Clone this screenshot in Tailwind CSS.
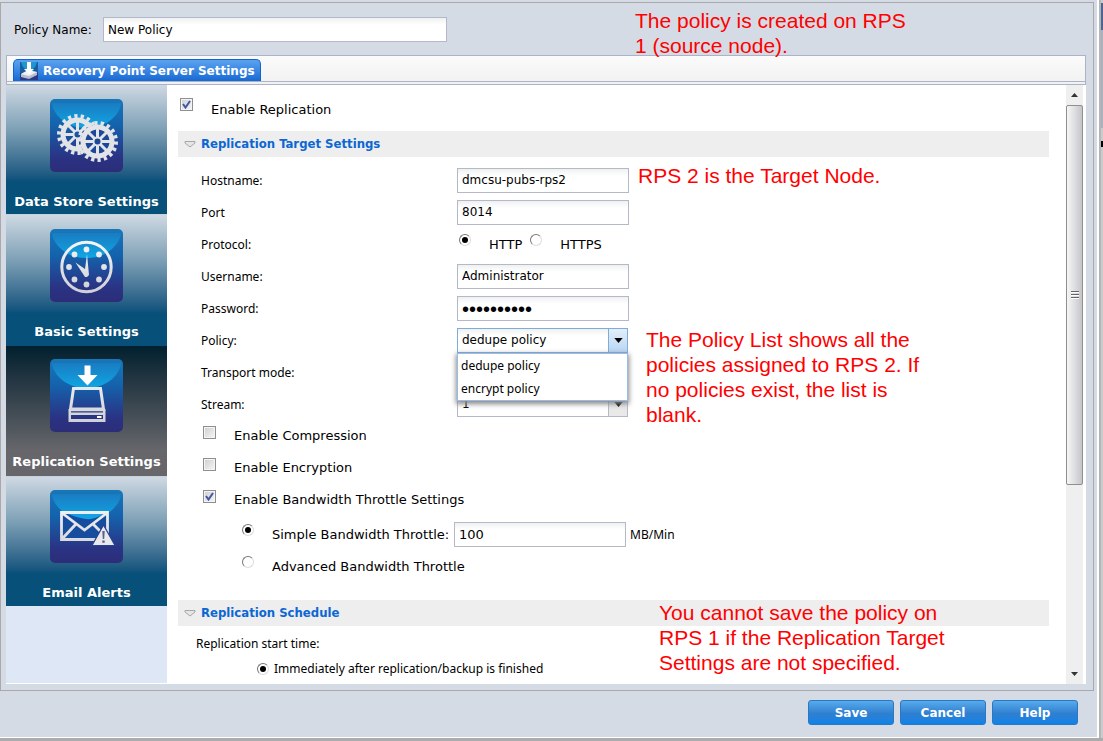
<!DOCTYPE html>
<html lang="en">
<head>
    <meta charset="utf-8">
    <title>New Policy</title>
    <script src="https://cdn.jsdelivr.net/npm/@tailwindcss/browser@4"></script>
</head>
<body class="flex min-h-screen bg-[#acacac] pb-[3px] font-['Noto_Sans','DejaVu_Sans',sans-serif] text-xs text-black">

<!-- shared gradients and icon parts -->
<svg class="absolute size-0" aria-hidden="true">
    <defs>
        <linearGradient id="tile" x1="0" y1="0" x2="0" y2="1">
            <stop offset="0" stop-color="#1777b9"/>
            <stop offset=".35" stop-color="#1463ad"/>
            <stop offset=".8" stop-color="#2a3384"/>
            <stop offset="1" stop-color="#2c2d78"/>
        </linearGradient>
        <linearGradient id="gloss" x1="0" y1="0" x2="0" y2="1">
            <stop offset="0" stop-color="#1a7cc2"/>
            <stop offset="1" stop-color="#0fa6e4"/>
        </linearGradient>
        <linearGradient id="metal" gradientUnits="userSpaceOnUse" x1="0" y1="15" x2="0" y2="62">
            <stop offset="0" stop-color="#f4f4f6"/>
            <stop offset="1" stop-color="#d0d1d6"/>
        </linearGradient>
        <g id="base">
            <rect width="73" height="73" rx="5" fill="url(#tile)"/>
            <path d="M2 4H71C71 12 60 29 36.500 29S2 12 2 4Z" fill="url(#gloss)"/>
        </g>
        <g id="gear" fill="none" stroke="#e3e4e8">
            <circle r="18.500" stroke-width="4" pathLength="36" stroke-dasharray="1 1"/>
            <circle r="14.500" stroke-width="5"/>
            <circle r="4" stroke-width="2"/>
            <path d="M0-13V-4M0 13V4M-13 0H-4M13 0H4M-9-9L-3-3M9-9L3-3M-9 9L-3 3M9 9L3 3" stroke-width="3"/>
        </g>
    </defs>
</svg>

<div class="flex min-w-0 flex-1 flex-col border-r-2 border-b border-white bg-[#d5dbe5] pt-[2px]">
    <main class="relative mr-[3px] flex flex-1 flex-col border border-[#a9a9ac] pr-[7px] pb-[6px] pl-[5px]">

        <div class="flex items-center gap-[9px] pt-[14px] pb-[13px] pl-2 font-['DejaVu_Sans',sans-serif]">
            <label for="policy-name" class="w-20 whitespace-nowrap">Policy Name:</label>
            <input id="policy-name" type="text" value="New Policy" class="h-[25px] w-[344px] border border-[#b5b8c8] bg-white bg-linear-to-b from-[#eff1f1] to-white to-30% px-1">
        </div>

        <div class="border border-[#abb3c9] bg-[#fafafa] bg-linear-to-b from-[#fbfbfb] to-[#f1f1f1] pb-[2px]">
            <div class="flex border-b border-[#abb3c9] pt-[3px] pl-[6px]">
                <button type="button" class="flex h-[22px] items-center gap-[5px] rounded-t-[5px] border border-b-0 border-[#1064cf] bg-linear-to-b from-[#5ba3f0] to-[#1568d3] pr-[5px] pl-[6px] font-['DejaVu_Sans',sans-serif] font-bold whitespace-nowrap text-white">
                    <svg class="size-[18px]" viewBox="0 0 18 18">
                        <path fill="#17609f" d="M0 0H18V18H0z"/>
                        <path fill="#2b3b85" d="M0 11H18V18H0z"/>
                        <path fill="#1e96d4" d="M1 0H17Q15 8 9 8T1 0z"/>
                        <path fill="#b6bfd0" d="M1 12L8 9L17 10V13L9 17L1 15z"/>
                        <path fill="#eef1f6" d="M1 12L8 8L17 10L9 14z"/>
                        <path fill="#fff" d="M7 0H11V7H14L9 12L4 7H7z"/>
                    </svg>
                    Recovery Point Server Settings
                </button>
            </div>
        </div>

        <div class="flex flex-1 bg-white">
            <nav class="flex w-[161px] shrink-0 flex-col border-b border-white bg-[#dde7f6] font-['DejaVu_Sans',sans-serif] text-[13px] leading-4 font-bold text-white">
                <a href="#data-store" class="flex h-[130px] flex-col items-center gap-[22px] border-b border-[#c5d3df] bg-linear-to-b from-[#cfd9e3] via-[#7c9fb5] via-35% to-[#06507a] to-75% pt-[14px] whitespace-nowrap">
                    <svg class="size-[73px] shrink-0" viewBox="0 0 73 73">
                        <use href="#base"/>
                        <use href="#gear" transform="translate(27.500 35.500)"/>
                        <circle cx="47.500" cy="42.500" r="17" fill="#1d489a"/>
                        <use href="#gear" transform="translate(47.500 42.500)"/>
                    </svg>
                    Data Store Settings
                </a>
                <a href="#basic" class="flex h-[131px] flex-col items-center gap-[22px] bg-linear-to-b from-[#cfd9e3] via-[#7c9fb5] via-35% to-[#06507a] to-75% pt-[14px] whitespace-nowrap">
                    <svg class="size-[73px] shrink-0" viewBox="0 0 73 73">
                        <use href="#base"/>
                        <circle cx="36.500" cy="38" r="24.700" fill="none" stroke="url(#metal)" stroke-width="3"/>
                        <g fill="url(#metal)">
                            <circle cx="36.500" cy="20.500" r="2.900"/>
                            <circle cx="49" cy="25.500" r="2.900"/>
                            <circle cx="54" cy="38" r="2.900"/>
                            <circle cx="49" cy="50.500" r="2.900"/>
                            <circle cx="36.500" cy="55.500" r="2.900"/>
                            <circle cx="24.500" cy="50.500" r="2.900"/>
                            <circle cx="19" cy="38" r="2.900"/>
                            <circle cx="24.500" cy="25.500" r="2.900"/>
                            <path d="M37 25L39 46L37 48H35L25.500 33.500L35 40z"/>
                        </g>
                    </svg>
                    Basic Settings
                </a>
                <a href="#replication" aria-current="page" class="flex h-[130px] flex-col items-center gap-[22px] bg-linear-to-b from-[#02202f] to-[#66666b] to-80% pt-[13px] whitespace-nowrap">
                    <svg class="size-[73px] shrink-0" viewBox="0 0 73 73">
                        <use href="#base"/>
                        <path fill="#fff" d="M34.500 6.500H40.500V16H47.500L37.500 26.500L27.500 16H34.500z"/>
                        <path fill="none" stroke="url(#metal)" stroke-width="3" d="M23.500 29.500H50.500L53.500 50H20.500z"/>
                        <path fill="url(#metal)" fill-rule="evenodd" d="M18.500 50H55.500V63H18.500zM21 52.200V53.500H53V52.200zM21 56V60H53V56z"/>
                        <path fill="#fff" d="M47 57H51.500V59H47z"/>
                    </svg>
                    Replication Settings
                </a>
                <a href="#email" class="flex h-[130px] flex-col items-center gap-[22px] border-t border-[#c5d3df] bg-linear-to-b from-[#cfd9e3] via-[#7c9fb5] via-35% to-[#06507a] to-75% pt-[13px] whitespace-nowrap">
                    <svg class="size-[73px] shrink-0" viewBox="0 0 73 73">
                        <use href="#base"/>
                        <path d="M11 21.500H58V50H11z" fill="#174d9f"/>
                        <path d="M18 24H54Q44 30 36 29T18 24z" fill="#12a2e3"/>
                        <path fill="none" stroke="url(#metal)" stroke-width="2.800" d="M11.500 22.500H57.500V49.500H11.500zM12 23L34.500 40L57 23M12 49L26 34M43 34L50 41"/>
                        <path fill="#e9e9ec" stroke="#28408f" stroke-width="1.200" d="M53.500 35L65 55.500H42z"/>
                        <path fill="#5a5f94" d="M52.300 41H54.700L54.200 49H52.800zM52.300 50.500H54.700V52.800H52.300z"/>
                    </svg>
                    Email Alerts
                </a>
            </nav>

            <form class="min-w-0 flex-1 pr-[17px] pb-[3px] pl-[11px]">
                <div class="flex h-[46px] gap-[18px] pt-[13px] pl-[2px] font-['DejaVu_Sans',sans-serif] text-[13px]">
                    <span class="grid size-[13px] place-items-center">
                        <input id="enable-replication" type="checkbox" checked class="peer col-start-1 row-start-1 size-[13px] appearance-none border border-[#8e8f8f] bg-linear-to-br from-[#cbcfd5] to-[#f6f6f6] shadow-[inset_0_0_0_1px_#f4f4f4]">
                        <svg class="pointer-events-none invisible col-start-1 row-start-1 size-[9px] peer-checked:visible" viewBox="0 0 9 9"><path d="M1 4L3.500 7.500L8 1" fill="none" stroke="#43569f" stroke-width="2"/></svg>
                    </span>
                    <label for="enable-replication" class="leading-[23px]">Enable Replication</label>
                </div>

                <h2 class="flex h-[26px] items-center gap-[5px] bg-[#eeeeee] pl-[6px] font-['DejaVu_Sans_Condensed','DejaVu_Sans',sans-serif] text-[13px] font-bold text-[#0c67d3]">
                    <svg class="h-[7px] w-3" viewBox="0 0 12 7"><path d="M1 .5H11V2L6 6L1 2z" fill="#e6e6e6" stroke="#a7a7a7"/></svg>
                    Replication Target Settings
                </h2>

                <div class="grid auto-rows-[32px] grid-cols-[256px_1fr] pt-[11px] pl-[23px] leading-[25px]">
                    <label for="hostname">Hostname:</label>
                    <input id="hostname" type="text" value="dmcsu-pubs-rps2" class="h-[25px] w-[172px] border border-[#b5b8c8] bg-linear-to-b from-[#eff1f1] to-white to-30% px-1 font-['DejaVu_Sans',sans-serif]">
                    <label for="port">Port</label>
                    <input id="port" type="text" value="8014" class="h-[25px] w-[172px] border border-[#b5b8c8] bg-linear-to-b from-[#eff1f1] to-white to-30% px-1 font-['DejaVu_Sans',sans-serif]">
                    <span id="protocol">Protocol:</span>
                    <div role="radiogroup" aria-labelledby="protocol" class="flex pl-[2px] font-['DejaVu_Sans',sans-serif] text-[13px]">
                        <input id="http" type="radio" name="protocol" checked class="mt-[2px] mr-[18px] grid size-3 shrink-0 appearance-none place-items-center rounded-full border border-t-[#777] border-r-[#ddd] border-b-[#ddd] border-l-[#777] checked:before:size-[6px] checked:before:rounded-full checked:before:bg-black">
                        <label for="http" class="mr-2">HTTP</label>
                        <input id="https" type="radio" name="protocol" class="mt-[2px] mr-[18px] grid size-3 shrink-0 appearance-none place-items-center rounded-full border border-t-[#777] border-r-[#ddd] border-b-[#ddd] border-l-[#777] checked:before:size-[6px] checked:before:rounded-full checked:before:bg-black">
                        <label for="https">HTTPS</label>
                    </div>
                    <label for="username">Username:</label>
                    <input id="username" type="text" value="Administrator" class="h-[25px] w-[172px] border border-[#b5b8c8] bg-linear-to-b from-[#eff1f1] to-white to-30% px-1 font-['DejaVu_Sans',sans-serif]">
                    <label for="password">Password:</label>
                    <input id="password" type="password" value="password10" class="h-[25px] w-[172px] border border-[#b5b8c8] bg-linear-to-b from-[#eff1f1] to-white to-30% px-1 font-['Liberation_Sans',Arial,sans-serif] text-xl">
                    <label for="policy">Policy:</label>
                    <div class="relative grid h-[25px] w-[171px]">
                        <select id="policy" class="col-start-1 row-start-1 h-[25px] appearance-none border border-[#7eadd9] bg-linear-to-b from-[#eff1f1] to-white to-30% pr-5 pl-1 font-['DejaVu_Sans',sans-serif] leading-[23px]">
                            <option>dedupe policy</option>
                            <option>encrypt policy</option>
                        </select>
                        <span class="pointer-events-none col-start-1 row-start-1 grid w-5 place-items-center justify-self-end border border-[#7eadd9] bg-linear-to-b from-[#e4effb] to-[#b9d6f4]">
                            <svg class="h-[5px] w-[9px]" viewBox="0 0 10 6"><path d="M0 0H10L5 6z"/></svg>
                        </span>
                        <ul class="absolute top-[25px] left-0 z-10 w-full border border-[#99bbe8] bg-white leading-[23px] shadow-[0_2px_5px_1px_#888]">
                            <li class="px-[3px]">dedupe policy</li>
                            <li class="px-[3px]">encrypt policy</li>
                        </ul>
                    </div>
                    <label for="transport">Transport mode:</label>
                    <select id="transport" class="h-[25px] w-[171px] appearance-none border border-[#b5b8c8] bg-white"></select>
                    <label for="stream">Stream:</label>
                    <div class="grid h-[25px] w-[171px]">
                        <select id="stream" class="col-start-1 row-start-1 h-[25px] appearance-none border border-[#b5b8c8] bg-white pr-5 pl-1 font-['DejaVu_Sans',sans-serif] leading-[23px]">
                            <option>1</option>
                        </select>
                        <span class="pointer-events-none col-start-1 row-start-1 grid w-5 place-items-center justify-self-end border border-[#b5b8c8] bg-[#e9e9e9]">
                            <svg class="h-[5px] w-[9px]" viewBox="0 0 10 6"><path d="M0 0H10L5 6z"/></svg>
                        </span>
                    </div>
                </div>

                <div class="flex flex-col pl-[25px] font-['DejaVu_Sans',sans-serif] text-[13px] leading-[23px]">
                    <div class="flex h-8 gap-[18px]">
                        <span class="mt-[2px] grid size-[13px] place-items-center">
                            <input id="compression" type="checkbox" class="peer col-start-1 row-start-1 size-[13px] appearance-none border border-[#8e8f8f] bg-linear-to-br from-[#cbcfd5] to-[#f6f6f6] shadow-[inset_0_0_0_1px_#f4f4f4]">
                            <svg class="pointer-events-none invisible col-start-1 row-start-1 size-[9px] peer-checked:visible" viewBox="0 0 9 9"><path d="M1 4L3.500 7.500L8 1" fill="none" stroke="#43569f" stroke-width="2"/></svg>
                        </span>
                        <label for="compression">Enable Compression</label>
                    </div>
                    <div class="flex h-8 gap-[18px]">
                        <span class="mt-[2px] grid size-[13px] place-items-center">
                            <input id="encryption" type="checkbox" class="peer col-start-1 row-start-1 size-[13px] appearance-none border border-[#8e8f8f] bg-linear-to-br from-[#cbcfd5] to-[#f6f6f6] shadow-[inset_0_0_0_1px_#f4f4f4]">
                            <svg class="pointer-events-none invisible col-start-1 row-start-1 size-[9px] peer-checked:visible" viewBox="0 0 9 9"><path d="M1 4L3.500 7.500L8 1" fill="none" stroke="#43569f" stroke-width="2"/></svg>
                        </span>
                        <label for="encryption">Enable Encryption</label>
                    </div>
                    <div class="flex h-[34px] gap-[18px]">
                        <span class="mt-[2px] grid size-[13px] place-items-center">
                            <input id="throttle" type="checkbox" checked class="peer col-start-1 row-start-1 size-[13px] appearance-none border border-[#8e8f8f] bg-linear-to-br from-[#cbcfd5] to-[#f6f6f6] shadow-[inset_0_0_0_1px_#f4f4f4]">
                            <svg class="pointer-events-none invisible col-start-1 row-start-1 size-[9px] peer-checked:visible" viewBox="0 0 9 9"><path d="M1 4L3.500 7.500L8 1" fill="none" stroke="#43569f" stroke-width="2"/></svg>
                        </span>
                        <label for="throttle">Enable Bandwidth Throttle Settings</label>
                    </div>
                    <div class="flex h-8 pl-[39px] leading-[25px]">
                        <input id="simple" type="radio" name="throttle-mode" checked class="mt-[2px] mr-[18px] grid size-3 shrink-0 appearance-none place-items-center rounded-full border border-t-[#777] border-r-[#ddd] border-b-[#ddd] border-l-[#777] checked:before:size-[6px] checked:before:rounded-full checked:before:bg-black">
                        <label for="simple" class="w-[182px] whitespace-nowrap">Simple Bandwidth Throttle:</label>
                        <input type="text" value="100" aria-label="Simple bandwidth throttle" class="h-[25px] w-[172px] border border-[#b5b8c8] bg-linear-to-b from-[#eff1f1] to-white to-30% px-1">
                        <span class="pl-1 font-['Noto_Sans','DejaVu_Sans',sans-serif] text-xs leading-[25px]">MB/Min</span>
                    </div>
                    <div class="flex h-8 pl-[39px] leading-[25px]">
                        <input id="advanced" type="radio" name="throttle-mode" class="mt-[2px] mr-[18px] grid size-3 shrink-0 appearance-none place-items-center rounded-full border border-t-[#777] border-r-[#ddd] border-b-[#ddd] border-l-[#777] checked:before:size-[6px] checked:before:rounded-full checked:before:bg-black">
                        <label for="advanced">Advanced Bandwidth Throttle</label>
                    </div>
                </div>

                <h2 class="mt-[14px] flex h-[26px] items-center gap-[5px] bg-[#eeeeee] pl-[6px] font-['DejaVu_Sans_Condensed','DejaVu_Sans',sans-serif] text-[13px] font-bold text-[#0c67d3]">
                    <svg class="h-[7px] w-3" viewBox="0 0 12 7"><path d="M1 .5H11V2L6 6L1 2z" fill="#e6e6e6" stroke="#a7a7a7"/></svg>
                    Replication Schedule
                </h2>
                <p class="pt-[5px] pl-[18px] leading-[25px]">Replication start time:</p>
                <div class="flex items-center gap-[5px] pl-[79px] leading-[25px]">
                    <input id="immediately" type="radio" name="start-time" checked class="grid size-3 shrink-0 appearance-none place-items-center rounded-full border border-t-[#777] border-r-[#ddd] border-b-[#ddd] border-l-[#777] checked:before:size-[6px] checked:before:rounded-full checked:before:bg-black">
                    <label for="immediately">Immediately after replication/backup is finished</label>
                </div>
            </form>

            <div class="mr-[3px] flex w-[17px] shrink-0 flex-col bg-[#efefef]">
                <button type="button" aria-label="Scroll up" class="grid h-5 place-items-center">
                    <svg class="h-1 w-[7px]" viewBox="0 0 7 4"><path d="M0 4H7L3.500 0z" fill="#333"/></svg>
                </button>
                <div class="flex flex-[379] flex-col items-center justify-center gap-px rounded-[2px] border border-[#8f8f8f] bg-linear-to-r from-[#f6f6f6] via-[#dfdfe2] via-50% to-[#c4c5ca]">
                    <span class="h-[2px] w-2 border-b border-white bg-[#666]"></span>
                    <span class="h-[2px] w-2 border-b border-white bg-[#666]"></span>
                    <span class="h-[2px] w-2 border-b border-white bg-[#666]"></span>
                </div>
                <div class="flex-[180]"></div>
                <button type="button" aria-label="Scroll down" class="grid h-5 place-items-center">
                    <svg class="h-1 w-[7px]" viewBox="0 0 7 4"><path d="M0 0H7L3.500 4z" fill="#333"/></svg>
                </button>
            </div>
        </div>

        <!-- notes over the dialog -->
        <div class="pointer-events-none font-['Liberation_Sans',Arial,sans-serif] text-[21px] leading-[25px] whitespace-nowrap text-[#ff0000]">
            <p class="absolute top-[5px] left-[634px]">The policy is created on RPS<br>1 (source node).</p>
            <p class="absolute top-[160px] left-[637px]">RPS 2 is the Target Node.</p>
            <p class="absolute top-[324px] left-[645px]">The Policy List shows all the<br>policies assigned to RPS 2. If<br>no policies exist, the list is<br>blank.</p>
            <p class="absolute top-[597px] left-[658px]">You cannot save the policy on<br>RPS 1 if the Replication Target<br>Settings are not specified.</p>
        </div>
    </main>

    <footer class="flex justify-end gap-[6px] pt-[9px] pr-[19px] pb-3 font-['DejaVu_Sans',sans-serif] font-bold text-white">
        <button type="button" class="h-[25px] w-[86px] rounded-[3px] border border-[#2a78c4] bg-linear-to-b from-[#58abeb] via-[#2f7fd0] via-55% to-[#0a83e8]">Save</button>
        <button type="button" class="h-[25px] w-[86px] rounded-[3px] border border-[#2a78c4] bg-linear-to-b from-[#58abeb] via-[#2f7fd0] via-55% to-[#0a83e8]">Cancel</button>
        <button type="button" class="h-[25px] w-[86px] rounded-[3px] border border-[#2a78c4] bg-linear-to-b from-[#58abeb] via-[#2f7fd0] via-55% to-[#0a83e8]">Help</button>
    </footer>
</div>

<!-- sliver of the window behind -->
<div class="flex w-1 shrink-0 flex-col border-l-2 border-[#b5b5b5] bg-[#c9cbcd]">
    <span class="mt-[3px] h-[27px] bg-[#4c6594]"></span>
    <span class="h-[98px] bg-[#a9b1bd]"></span>
    <span class="mt-[13px] h-[6px] bg-black"></span>
</div>
</body>
</html>
